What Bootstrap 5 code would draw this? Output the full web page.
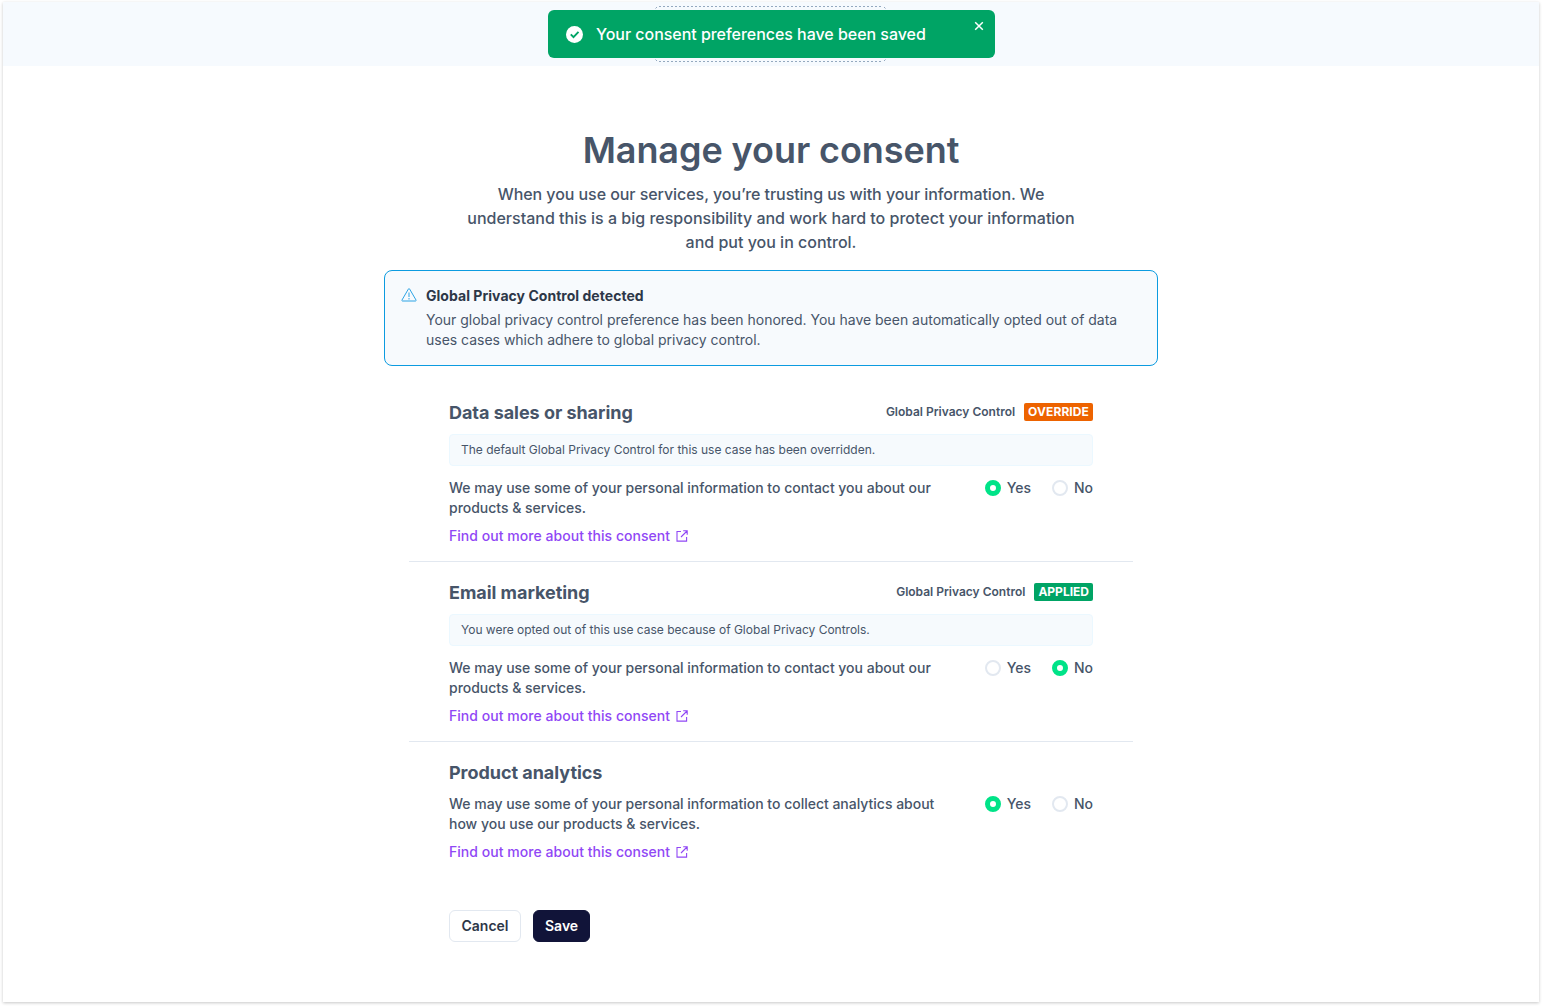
<!DOCTYPE html>
<html lang="en">
<head>
<meta charset="utf-8">
<meta name="viewport" content="width=device-width, initial-scale=1">
<title>Manage your consent</title>
<link href="https://cdn.jsdelivr.net/npm/bootstrap@5.3.0/dist/css/bootstrap.min.css" rel="stylesheet">
<style>
body{font-family:Inter,"Liberation Sans",sans-serif;color:#475569;font-size:14px;line-height:20px;font-weight:500;background:#fff;min-height:1006px;padding:2px 3px 4px}
.frame{height:1000px;background:#fff;box-shadow:0 1px 3px rgba(0,0,0,.22)}
.topbar{height:64px;background:#f6fafe}
.logo-slot{width:231px;height:56px;margin-right:1px}
.toast-bar{top:10px;left:548px;width:447px;height:48px;background:#00a465;border-radius:6px;color:#fff;font-size:16px;line-height:24px;padding:0 17.5px;gap:13.5px;font-weight:500;letter-spacing:-.035px}
.toast-close{top:11px;right:11px;width:10px;height:10px}
.page-title{font-size:36px;line-height:40px;font-weight:600;margin:0 0 12px;letter-spacing:-.07px}
.intro{width:624px;font-size:16px;line-height:24px;margin:0 auto 16px}
.intro-lead{letter-spacing:-.06px}
.notice{width:774px;height:96px;padding:15px 16px;border:1px solid #0c9be0;border-radius:8px;background:#f7fafd;gap:9px}
.notice-title{color:#2d3748;font-weight:700;margin-bottom:4px;letter-spacing:.035px}
.notice-text{font-weight:400;letter-spacing:-.012px}
.uses{width:724px;margin-top:16px}
.use{padding:16px 40px 15px}
.use+.use{border-top:1px solid #e2e8f0}
.use-title{font-size:18px;line-height:28px;font-weight:700;margin:0;padding-top:1px;height:28px;letter-spacing:-.04px}
.gpc{font-size:12px;line-height:18px;font-weight:600;gap:9px}
.tag{color:#fff;font-weight:700;border-radius:2px;padding:0 4px;height:18px}
.tag-override{background:#ed6300;letter-spacing:.1px}.tag-applied{background:#00a465}
.gpc-note{height:32px;margin-top:8px;padding:0 11px;border:1px solid #ebf8ff;border-radius:4px;background:#f6fafd;font-size:12px;font-weight:400;letter-spacing:-.014px}
.copy{width:500px;letter-spacing:-.014px}
.more,.more:hover{color:#9047f5;text-decoration:none;gap:6px;margin-top:8px;letter-spacing:.04px}
.choice{gap:6px}
.choice input{appearance:none;width:16px;height:16px;margin:0;border:2px solid #e2e8f0;border-radius:50%;background:#fff}
.choice input:checked{border:5px solid #00e388}
.act{font-size:14px;font-weight:600;line-height:20px;padding:5px 11px;border-radius:6px}
.act-cancel,.act-cancel:hover{border:1px solid #e2e8f0;color:#2d3748;width:72px}
.act-save,.act-save:hover{background:#111439;border:1px solid #111439;color:#fff;width:57px}
</style>
</head>
<body>
<div class="frame">
  <header class="topbar d-flex justify-content-center align-items-center">
    <svg class="logo-slot" viewBox="0 0 231 56"><path d="M4 .5h223M4 55.5h223" stroke="#94a9bf" stroke-dasharray="2 2"/><path d="M.5 2.5 2 1M229 1l1.500 1.500M.5 53.500 2 55M229 55l1.500-1.500" stroke="#94a9bf"/></svg>
  </header>
  <main class="d-flex flex-column align-items-center">
    <div class="text-center" style="padding-top:64px">
      <h1 class="page-title">Manage your consent</h1>
      <p class="intro"><span class="intro-lead">When you use our services, you’re trusting us with your information. We</span> understand this is a big responsibility and work hard to protect your information and put you in control.</p>
    </div>
    <section class="notice d-flex align-items-start">
      <svg class="flex-shrink-0" style="margin-top:1px" width="16" height="16" viewBox="0 0 16 16" fill="none" stroke="#2ba3e5"><path d="M7.350 2.100 1 13c-.3.6 0 1 .6 1h12.800c.6 0 .9-.4.6-1L8.650 2.100c-.3-.6-1-.6-1.300 0Z"/><path d="M8 5.500v4.500M8 11v1.500"/></svg>
      <div>
        <div class="notice-title">Global Privacy Control detected</div>
        <div class="notice-text">Your global privacy control preference has been honored. You have been automatically opted out of data uses cases which adhere to global privacy control.</div>
      </div>
    </section>
    <div class="uses">
      <section class="use">
        <div class="d-flex justify-content-between align-items-center">
          <h2 class="use-title">Data sales or sharing</h2>
          <div class="gpc d-flex">Global Privacy Control<span class="tag tag-override">OVERRIDE</span></div>
        </div>
        <div class="gpc-note d-flex align-items-center">The default Global Privacy Control for this use case has been overridden.</div>
        <div class="d-flex justify-content-between align-items-start" style="margin-top:12px">
          <div class="copy">We may use some of your personal information to contact you about our products &amp; services.</div>
          <div class="d-flex" style="gap:21px">
            <label class="choice d-flex align-items-center"><input type="radio" name="sales" checked>Yes</label>
            <label class="choice d-flex align-items-center"><input type="radio" name="sales">No</label>
          </div>
        </div>
        <a href="#" class="more d-flex align-items-center">Find out more about this consent<svg width="12" height="12" viewBox="0 0 12 12" fill="none" stroke="currentColor" stroke-width="1.1"><path d="M5 1.500H1v9.600h9.600V7M7.200.8h4v4M11 1 5 7"/></svg></a>
      </section>
      <section class="use">
        <div class="d-flex justify-content-between align-items-center">
          <h2 class="use-title">Email marketing</h2>
          <div class="gpc d-flex">Global Privacy Control<span class="tag tag-applied">APPLIED</span></div>
        </div>
        <div class="gpc-note d-flex align-items-center">You were opted out of this use case because of Global Privacy Controls.</div>
        <div class="d-flex justify-content-between align-items-start" style="margin-top:12px">
          <div class="copy">We may use some of your personal information to contact you about our products &amp; services.</div>
          <div class="d-flex" style="gap:21px">
            <label class="choice d-flex align-items-center"><input type="radio" name="email">Yes</label>
            <label class="choice d-flex align-items-center"><input type="radio" name="email" checked>No</label>
          </div>
        </div>
        <a href="#" class="more d-flex align-items-center">Find out more about this consent<svg width="12" height="12" viewBox="0 0 12 12" fill="none" stroke="currentColor" stroke-width="1.1"><path d="M5 1.500H1v9.600h9.600V7M7.200.8h4v4M11 1 5 7"/></svg></a>
      </section>
      <section class="use">
        <h2 class="use-title">Product analytics</h2>
        <div class="d-flex justify-content-between align-items-start" style="margin-top:8px">
          <div class="copy">We may use some of your personal information to collect analytics about how you use our products &amp; services.</div>
          <div class="d-flex" style="gap:21px">
            <label class="choice d-flex align-items-center"><input type="radio" name="analytics" checked>Yes</label>
            <label class="choice d-flex align-items-center"><input type="radio" name="analytics">No</label>
          </div>
        </div>
        <a href="#" class="more d-flex align-items-center">Find out more about this consent<svg width="12" height="12" viewBox="0 0 12 12" fill="none" stroke="currentColor" stroke-width="1.1"><path d="M5 1.500H1v9.600h9.600V7M7.200.8h4v4M11 1 5 7"/></svg></a>
        <div class="d-flex" style="gap:12px;margin-top:48px">
          <button type="button" class="btn act act-cancel">Cancel</button>
          <button type="button" class="btn act act-save">Save</button>
        </div>
      </section>
    </div>
  </main>
</div>
<div class="toast-bar position-absolute d-flex align-items-center" role="status">
  <svg width="17" height="17" viewBox="0 0 17 17"><circle cx="8.5" cy="8.5" r="8.5" fill="#fff"/><path d="m4.800 8.300 2.700 2.800L12.500 5.800" fill="none" stroke="#00a465" stroke-width="1.9"/></svg>
  <span>Your consent preferences have been saved</span>
  <svg class="toast-close position-absolute" viewBox="0 0 10 10"><path d="m1.200 1.200 7.600 7.600m0-7.600L1.200 8.800" stroke="#fff" stroke-width="1.5"/></svg>
</div>
<script src="https://cdn.jsdelivr.net/npm/bootstrap@5.3.0/dist/js/bootstrap.bundle.min.js"></script>
</body>
</html>
